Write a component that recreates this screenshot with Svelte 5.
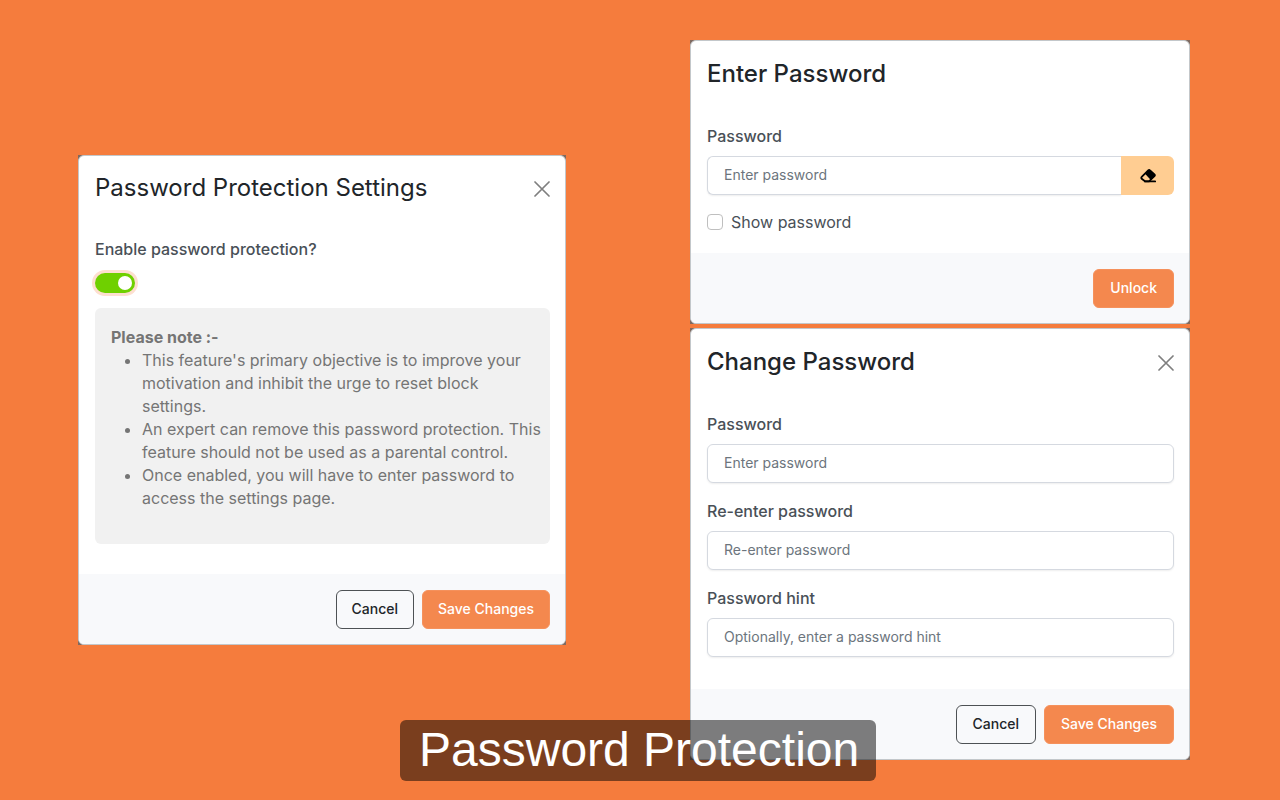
<script lang="ts">
    let protectionEnabled = $state(true);
    let unlockPassword = $state('');
    let showPassword = $state(false);

    const passwordFields = [
        { id: 'new-password', label: 'Password', type: 'password', placeholder: 'Enter password' },
        { id: 'repeat-password', label: 'Re-enter password', type: 'password', placeholder: 'Re-enter password' },
        { id: 'password-hint', label: 'Password hint', type: 'text', placeholder: 'Optionally, enter a password hint' },
    ];

    const clearPassword = () => {
        unlockPassword = '';
    }
</script>

{#snippet closeButton()}
    <button class="close" type="button" aria-label="Close">
        <svg viewBox="0 0 16 16" width="16" height="16">
            <path d="M1 1l14 14M15 1L1 15" fill="none" stroke="currentColor" stroke-width="1.7" stroke-linecap="round" />
        </svg>
    </button>
{/snippet}

<main class="page">
    <section class="frame">
        <div class="modal compact">
            <header>
                <h2>Password Protection Settings</h2>
                {@render closeButton()}
            </header>
            <div class="body">
                <label class="label" for="protection">Enable password protection?</label>
                <input class="switch" id="protection" type="checkbox" role="switch" bind:checked={protectionEnabled} />
                <div class="note">
                    <strong>Please note :-</strong>
                    <ul>
                        <li>This feature's primary objective is to improve your motivation and inhibit the urge to reset block settings.</li>
                        <li>An expert can remove this password protection. This feature should not be used as a parental control.</li>
                        <li>Once enabled, you will have to enter password to access the settings page.</li>
                    </ul>
                </div>
            </div>
            <footer>
                <button class="btn outline" type="button">Cancel</button>
                <button class="btn primary" type="button">Save Changes</button>
            </footer>
        </div>
    </section>

    <div class="stack">
        <section class="frame">
            <div class="modal">
                <header>
                    <h2>Enter Password</h2>
                </header>
                <div class="body">
                    <label class="label" for="unlock-password">Password</label>
                    <div class="input-group">
                        <input
                            class="input"
                            id="unlock-password"
                            type={showPassword ? 'text' : 'password'}
                            placeholder="Enter password"
                            bind:value={unlockPassword}
                        />
                        <button class="erase" type="button" aria-label="Clear password" onclick={clearPassword}>
                            <svg viewBox="0 0 16 16" width="16" height="16">
                                <path d="M5 13.300L1.700 10.800a1.300 1.300 0 0 1 0-1.900L8.200 2.400a1.300 1.300 0 0 1 1.800 0l4.400 4a1.300 1.300 0 0 1 0 1.800L9 13.300z" fill="none" stroke="currentColor" stroke-width="1.8" stroke-linejoin="round" />
                                <path d="M5 5.800l4.100-4a1 1 0 0 1 1 0l5 4.600v1.800L10.800 12z" fill="currentColor" />
                                <path d="M5 13.400h10.200" stroke="currentColor" stroke-width="1.800" stroke-linecap="round" />
                            </svg>
                        </button>
                    </div>
                    <label class="check">
                        <input type="checkbox" bind:checked={showPassword} />
                        Show password
                    </label>
                </div>
                <footer>
                    <button class="btn primary" type="button">Unlock</button>
                </footer>
            </div>
        </section>

        <section class="frame">
            <div class="modal">
                <header>
                    <h2>Change Password</h2>
                    {@render closeButton()}
                </header>
                <div class="body">
                    {#each passwordFields as field (field.id)}
                        <div class="field">
                            <label class="label" for={field.id}>{field.label}</label>
                            <input class="input" id={field.id} type={field.type} placeholder={field.placeholder} />
                        </div>
                    {/each}
                </div>
                <footer>
                    <button class="btn outline" type="button">Cancel</button>
                    <button class="btn primary" type="button">Save Changes</button>
                </footer>
            </div>
        </section>
    </div>

    <p class="caption">Password Protection</p>
</main>

<style>
    :global(body) {
        background-color: #f57c3d;
    }

    .page {
        position: relative;
        display: grid;
        grid-template-columns: 488fr 500fr;
        column-gap: 124px;
        align-items: center;
        min-height: 100vh;
        padding: 40px 90px 40px 78px;
        box-sizing: border-box;
        font-family: Inter, "Liberation Sans", sans-serif;
        font-size: 16px;
        line-height: 24px;
        color: #495057;
    }

    .stack {
        display: grid;
        gap: 4px;
    }

    .frame {
        background-color: #806a60;
    }

    .modal {
        border: 1px solid #c3c7ca;
        border-radius: 6px;
        background-color: #fff;
        overflow: hidden;
    }

    header {
        display: flex;
        align-items: center;
        justify-content: space-between;
        padding: 16px 15px 16px 16px;
    }

    h2 {
        margin: 0;
        font-size: 24px;
        font-weight: 500;
        line-height: 34px;
        color: #212529;
    }

    .close {
        display: flex;
        margin-top: 2px;
        padding: 0;
        border: none;
        background: none;
        color: #7f7f7f;
        cursor: pointer;
    }

    .body {
        padding: 17px 15px 16px 16px;
    }

    .label {
        display: block;
        margin-bottom: 8px;
        font-weight: 500;
    }

    .compact h2 {
        font-weight: 400;
        line-height: 32px;
    }

    .input {
        display: block;
        width: 100%;
        height: 39px;
        padding: 0 16px 2px;
        box-sizing: border-box;
        border: 1px solid #d5d9e0;
        border-radius: 6px;
        background-color: #fff;
        box-shadow: 0 1px 2px rgba(0, 0, 0, 0.07);
        font-family: inherit;
        font-size: 14px;
        color: #212529;
    }

    .input::placeholder {
        color: #6c757d;
        opacity: 1;
    }

    .field {
        margin-bottom: 16px;
    }

    .input-group {
        display: flex;
    }

    .input-group .input {
        flex: 1;
        border-right: none;
        border-radius: 6px 0 0 6px;
    }

    .erase {
        display: flex;
        align-items: center;
        justify-content: center;
        width: 53px;
        padding: 0;
        border: none;
        border-radius: 0 6px 6px 0;
        background-color: #ffcd92;
        color: #000;
        cursor: pointer;
    }

    .check {
        display: flex;
        align-items: center;
        gap: 8px;
        margin: 15px 0 3px;
    }

    .check input {
        appearance: none;
        width: 16px;
        height: 16px;
        margin: 0;
        border: 1px solid #bfbfbf;
        border-radius: 4px;
        background-color: #fff;
    }

    .check input:checked {
        background-color: #f4884e;
    }

    .switch {
        appearance: none;
        display: flex;
        align-items: center;
        width: 40px;
        height: 20px;
        margin: 12px 0 15px;
        padding: 3px;
        box-sizing: border-box;
        border-radius: 10px;
        background-color: #bfbfbf;
    }

    .switch::before {
        content: "";
        width: 14px;
        height: 14px;
        border-radius: 50%;
        background-color: #fff;
    }

    .switch:checked {
        justify-content: flex-end;
        background-color: #6fd000;
        box-shadow: 0 0 0 3px #fddfd0;
    }

    .note {
        margin-bottom: 14px;
        padding: 18px 8px 18px 16px;
        border-radius: 6px;
        background-color: #f1f1f1;
        line-height: 23px;
        color: #757575;
    }

    .note strong {
        display: block;
        font-weight: 700;
    }

    .note ul {
        margin: 0 0 16px;
        padding-left: 31px;
    }

    footer {
        display: flex;
        justify-content: flex-end;
        gap: 8px;
        padding: 16px 15px 15px 16px;
        background-color: #f8f9fb;
    }

    .btn {
        height: 39px;
        padding: 0 16px 3px;
        border: 1px solid transparent;
        border-radius: 6px;
        font-family: inherit;
        font-size: 14px;
        font-weight: 500;
        cursor: pointer;
    }

    .compact .btn {
        padding: 0 15px 2px;
    }

    .outline {
        border-color: #4d5154;
        background-color: transparent;
        color: #212529;
    }

    .primary {
        border-color: #f5915c;
        background-color: #f4884e;
        color: #fff;
    }

    .caption {
        position: absolute;
        bottom: 19px;
        left: 31.25%;
        margin: 0;
        padding: 3px 17px 4px 19px;
        border-radius: 6px;
        background-color: rgba(0, 0, 0, 0.5);
        font-family: "Liberation Sans", Arial, sans-serif;
        font-size: 48px;
        line-height: 54px;
        white-space: nowrap;
        color: #fff;
    }
</style>
